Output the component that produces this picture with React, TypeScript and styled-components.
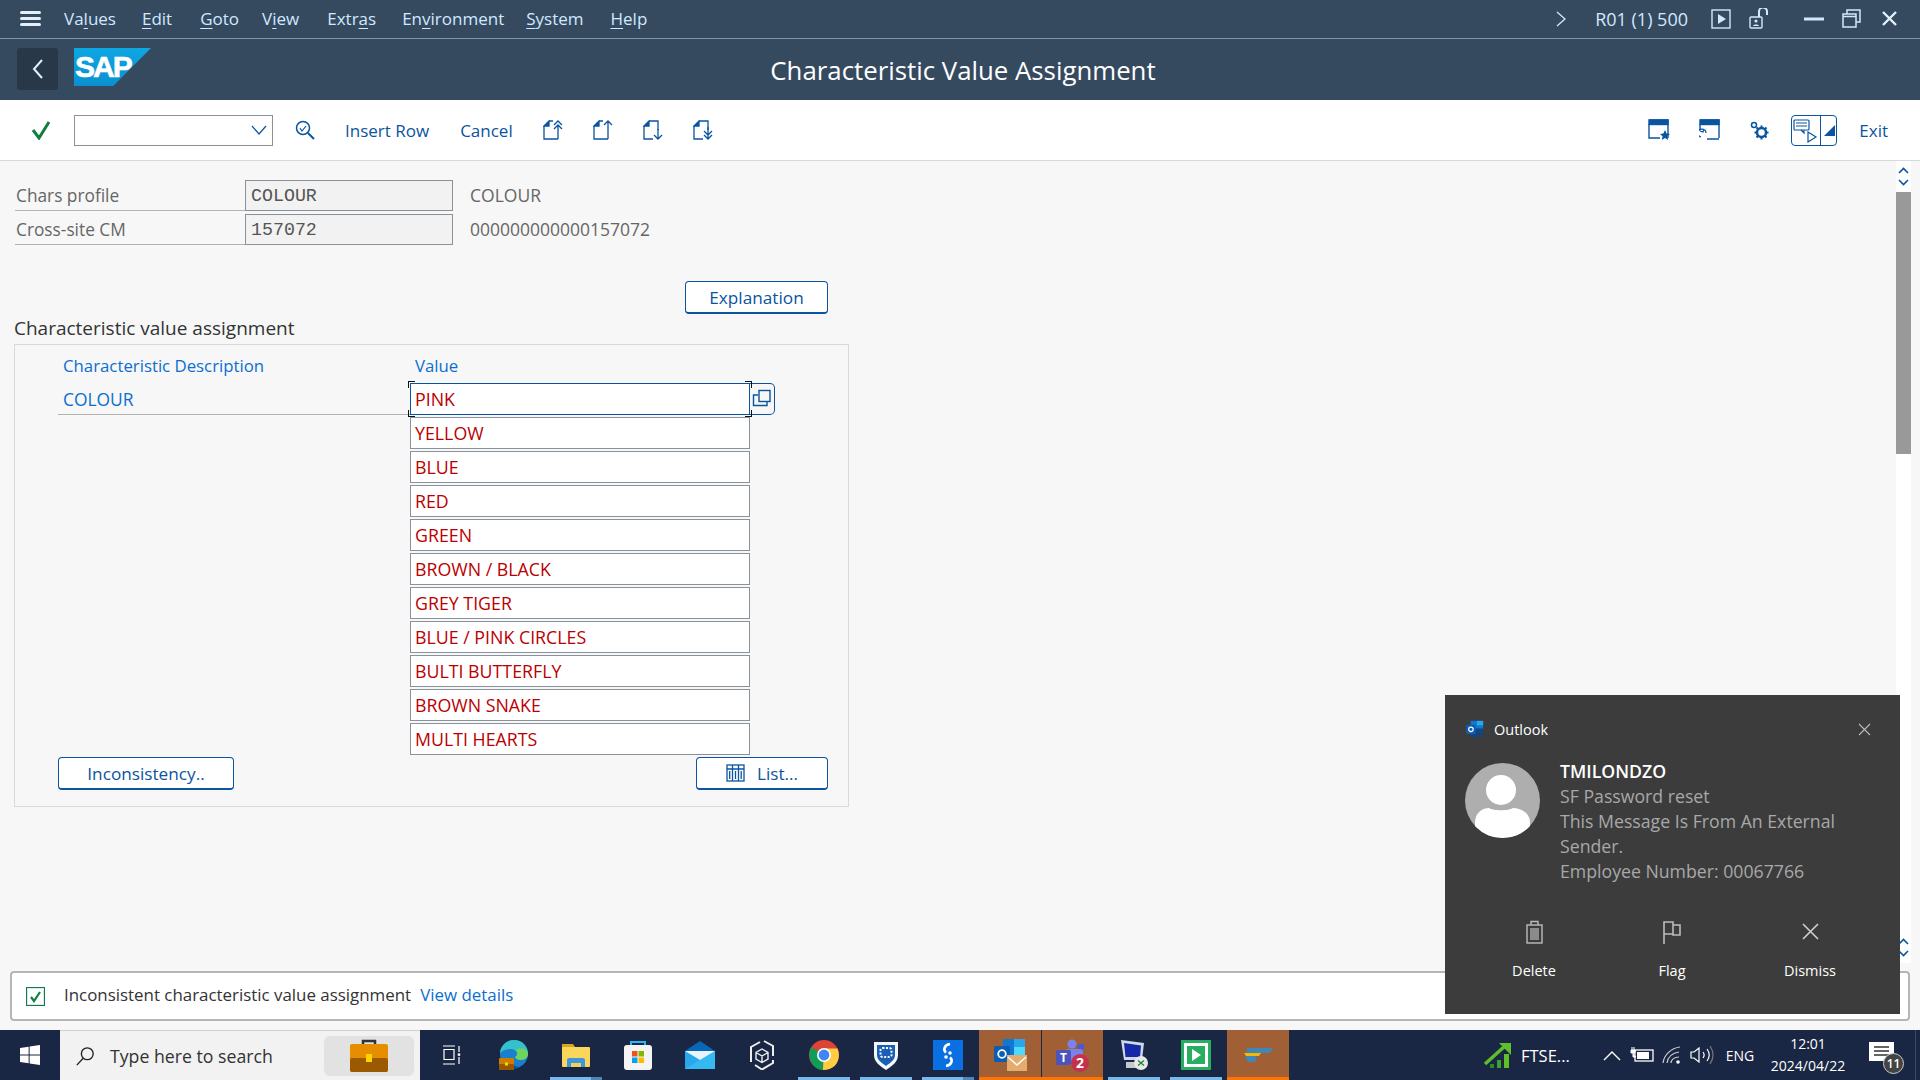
import React from "react";
import styled, { createGlobalStyle } from "styled-components";

const BLUE = "#0a54a0";
const UI_FONT = `"Open Sans", "Noto Sans", sans-serif`;

const GlobalStyle = createGlobalStyle`
  html, body {
    margin: 0;
    padding: 0;
    width: 1920px;
    height: 1080px;
    overflow: hidden;
    background: #f7f7f7;
    font-family: ${UI_FONT};
  }
  * { box-sizing: border-box; }
`;

const Page = styled.div`
  position: relative;
  display: flex;
  flex-direction: column;
  width: 1920px;
  height: 1080px;
`;

/* shell header */
const MenuBar = styled.div`
  display: flex;
  align-items: center;
  height: 39px;
  flex: none;
  padding-bottom: 1px;
  background: #354a5f;
  border-bottom: 1px solid #7f96b0;
  color: #d1e8ff;
  font-size: 17px;
`;

const Hamburger = styled.div`
  display: flex;
  flex-direction: column;
  gap: 3px;
  width: 21px;
  margin-left: 20px;
  margin-right: 23px;
  span {
    display: block;
    height: 3px;
    border-radius: 2px;
    background: #e3f0fc;
  }
`;

const MenuItem = styled.span<{ $gap: number }>`
  margin-right: ${(p) => p.$gap}px;
  u { text-underline-offset: 3px; text-decoration-thickness: 1px; }
`;

const MenuRight = styled.div`
  display: flex;
  align-items: center;
  margin-left: auto;
  svg { display: block; }
`;

const SystemName = styled.span`
  margin-left: 29px;
  margin-right: 23px;
  font-size: 18px;
`;

const TitleBar = styled.div`
  display: grid;
  grid-template-columns: 1fr auto 1fr;
  align-items: center;
  height: 61px;
  flex: none;
  background: #354a5f;
`;

const TitleLeft = styled.div`
  display: flex;
  align-items: flex-start;
  height: 100%;
  padding: 9px 0 0 17px;
`;

const BackButton = styled.div`
  display: flex;
  align-items: center;
  justify-content: center;
  width: 41px;
  height: 42px;
  border-radius: 3px;
  background: #283848;
`;

const SapLogo = styled.div`
  width: 77px;
  height: 38px;
  margin-left: 16px;
  padding-left: 1px;
  background: linear-gradient(180deg, #0ea7e3, #0a8fd0);
  clip-path: polygon(0 0, 100% 0, 51% 100%, 0 100%);
  color: #fff;
  font: 700 30px/38px "Liberation Sans", sans-serif;
  letter-spacing: -2px;
  -webkit-text-stroke: 0.6px #fff;
`;

const ScreenTitle = styled.div`
  margin-left: 6px;
  color: #fff;
  font-size: 25.8px;
`;

/* application toolbar */
const Toolbar = styled.div`
  display: flex;
  align-items: center;
  height: 61px;
  flex: none;
  padding-left: 31px;
  background: #fff;
  border-bottom: 1px solid #d9d9d9;
  color: ${BLUE};
  font-size: 17px;
  svg { display: block; flex: none; }
`;

const CommandBox = styled.div`
  display: flex;
  align-items: center;
  justify-content: flex-end;
  width: 199px;
  height: 31px;
  margin-left: 23px;
  margin-right: 22px;
  padding-right: 5px;
  border: 1px solid #89919a;
`;

const ToolText = styled.span<{ $left: number }>`
  margin-left: ${(p) => p.$left}px;
`;

const ToolIcon = styled.span<{ $left: number }>`
  display: block;
  margin-left: ${(p) => p.$left}px;
`;

const ToolbarRight = styled.div`
  display: flex;
  align-items: center;
  margin-left: auto;
  padding-right: 32px;
`;

const SplitToggle = styled.div`
  display: flex;
  width: 46px;
  height: 31px;
  margin-left: 22px;
  margin-right: 22px;
  border: 1px solid ${BLUE};
  border-radius: 4px;
  > div { display: flex; align-items: center; justify-content: center; }
  > div:first-child { flex: 1; border-right: 1px solid ${BLUE}; }
  > div:last-child { width: 15px; }
`;

/* body */
const Body = styled.div`
  display: flex;
  flex-direction: column;
  flex: 1;
  min-height: 0;
  background: #f7f7f7;
`;

const ScrollArea = styled.div`
  display: flex;
  flex: 1;
  min-height: 0;
`;

const Content = styled.div`
  flex: 1;
  padding: 19px 0 0 15px;
`;

const FormRow = styled.div`
  display: flex;
  align-items: center;
  height: 31px;
  margin-bottom: 3px;
`;

const FormLabel = styled.div`
  display: flex;
  align-items: center;
  width: 230px;
  height: 100%;
  padding-left: 1px;
  border-bottom: 1px solid #b3b3b3;
  color: #666;
  font-size: 17.3px;
`;

const DisplayField = styled.div`
  display: flex;
  align-items: center;
  width: 208px;
  height: 100%;
  padding-left: 5px;
  border: 1px solid #89919a;
  background: #f2f2f2;
  color: #555;
  font: 18.3px "Liberation Mono", monospace;
`;

const FieldText = styled.div`
  margin-left: 17px;
  margin-top: -1px;
  color: #666;
  font-size: 17.5px;
`;

const ButtonRow = styled.div<{ $width: number }>`
  display: flex;
  justify-content: space-between;
  width: ${(p) => p.$width}px;
`;

const EndRow = styled(ButtonRow)`
  justify-content: flex-end;
  margin-top: 36px;
`;

const PushButton = styled.button<{ $width: number }>`
  display: flex;
  align-items: center;
  justify-content: center;
  gap: 12px;
  width: ${(p) => p.$width}px;
  height: 33px;
  padding: 0;
  border: 1px solid ${BLUE};
  border-bottom-width: 2px;
  border-radius: 4px;
  background: #fff;
  color: ${BLUE};
  font: 17.2px ${UI_FONT};
`;

const GroupTitle = styled.div`
  height: 24px;
  margin: 2px 0 4px -1px;
  color: #333;
  font-size: 19px;
  line-height: 24px;
`;

const GroupBox = styled.div`
  width: 835px;
  height: 463px;
  margin-left: -1px;
  padding: 6px 0 0 43px;
  border: 1px solid #d9d9d9;
`;

const ValueGrid = styled.div`
  display: grid;
  grid-template-columns: 352px 340px 25px;
  grid-auto-rows: 32px;
  row-gap: 2px;
`;

const HeadRow = styled.div`
  display: grid;
  grid-template-columns: 352px 340px;
  align-items: center;
  height: 28px;
  margin-bottom: 4px;
  color: #0a6ed1;
  font-size: 16.8px;
  span { padding-left: 5px; }
`;

const DescCell = styled.div`
  display: flex;
  align-items: center;
  padding-left: 5px;
  border-bottom: 1px solid #b3b3b3;
  color: #0a6ed1;
  font-size: 17.4px;
`;

const ValueField = styled.div<{ $focused?: boolean }>`
  position: relative;
  grid-column: 2;
  display: flex;
  align-items: center;
  padding-left: 4px;
  border: 1px solid ${(p) => (p.$focused ? BLUE : "#89919a")};
  background: #fff;
  color: #bb0000;
  font-size: 17.8px;
`;

const FocusCorner = styled.i<{ $v: "top" | "bottom"; $h: "left" | "right" }>`
  position: absolute;
  ${(p) => p.$v}: -3px;
  ${(p) => p.$h}: -3px;
  width: 7px;
  height: 7px;
  border-${(p) => p.$v}: 1px solid #111;
  border-${(p) => p.$h}: 1px solid #111;
`;

const CopyButton = styled.div`
  display: flex;
  align-items: center;
  justify-content: center;
  border: 1px solid ${BLUE};
  border-left: none;
  border-radius: 0 5px 5px 0;
`;

const BoxButtons = styled(ButtonRow)`
  margin-top: 2px;
`;

const ScrollTrack = styled.div`
  display: flex;
  flex-direction: column;
  width: 15px;
  margin: 0 9px 0 0;
  background: #fff;
  svg { display: block; margin: 0 auto; }
`;

const ScrollArrows = styled.div`
  display: flex;
  flex-direction: column;
  gap: 5px;
  padding-top: 6px;
  height: 31px;
`;

const ScrollThumb = styled.div`
  height: 262px;
  background: #999;
`;

const ScrollSpacer = styled.div`
  flex: 1;
`;

const Footer = styled.div`
  flex: none;
  padding: 8px 10px 9px;
`;

const MessageBar = styled.div`
  display: flex;
  align-items: center;
  height: 50px;
  padding: 0 0 3px 13px;
  border: 2px solid #b5b5b5;
  border-radius: 4px;
  background: #fff;
  color: #333;
  font-size: 16.9px;
`;

const MessageCheck = styled.div`
  display: flex;
  align-items: center;
  justify-content: center;
  width: 19px;
  height: 19px;
  margin-top: 3px;
  margin-right: 19px;
  margin-left: 1px;
  border: 1px solid #107e3e;
  outline: 1px solid #d4e9f7;
  outline-offset: -2px;
`;

const DetailsLink = styled.span`
  margin-left: 9px;
  color: #0a6ed1;
`;

/* outlook toast */
const Toast = styled.div`
  position: absolute;
  left: 1445px;
  top: 695px;
  width: 455px;
  height: 319px;
  padding: 23px 0 0 20px;
  background: #3c3c3c;
  color: #fff;
  font-family: "Open Sans", sans-serif;
  svg { display: block; }
`;

const ToastHead = styled.div`
  display: flex;
  align-items: center;
  height: 22px;
  font-size: 14.5px;
  gap: 9px;
`;

const ToastClose = styled.div`
  margin-left: auto;
  margin-right: 29px;
`;

const ToastBody = styled.div`
  display: flex;
  gap: 20px;
  margin-top: 23px;
`;

const Avatar = styled.div`
  flex: none;
  width: 75px;
  height: 75px;
  border-radius: 50%;
  overflow: hidden;
`;

const ToastText = styled.div`
  width: 300px;
  margin-top: -4px;
  color: #a8a8a8;
  font-size: 17.7px;
  line-height: 25px;
  strong { display: block; color: #fff; font-weight: 600; }
`;

const ToastActions = styled.div`
  display: grid;
  grid-template-columns: repeat(3, 138px);
  margin-top: 36px;
`;

const ToastAction = styled.div`
  display: flex;
  flex-direction: column;
  align-items: center;
  gap: 15px;
  font-size: 14.5px;
  line-height: 24px;
`;

/* windows taskbar */
const Taskbar = styled.div`
  display: flex;
  align-items: stretch;
  height: 50px;
  flex: none;
  background: #1a2744;
  color: #fff;
  svg { display: block; }
`;

const StartButton = styled.div`
  display: flex;
  align-items: center;
  justify-content: center;
  width: 60px;
`;

const SearchBox = styled.div`
  display: flex;
  align-items: center;
  width: 360px;
  margin-right: 1px;
  padding: 0 6px 0 15px;
  background: #f2f2f2;
  border-top: 1px solid #cfcfcf;
  color: #333;
  font-size: 17.7px;
`;

const SearchLabel = styled.span`
  margin-left: 15px;
`;

const SearchPill = styled.div`
  display: flex;
  align-items: center;
  justify-content: center;
  width: 90px;
  height: 40px;
  margin-left: auto;
  border-radius: 6px;
  background: #e2e2e2;
`;

type CellState = "open" | "stack" | "active";

const TaskCell = styled.div<{ $state?: CellState; $divider?: boolean }>`
  position: relative;
  display: flex;
  align-items: center;
  justify-content: center;
  width: 62px;
  background: ${(p) => (p.$state === "active" ? "#a05f35" : "transparent")};
  box-shadow: ${(p) => (p.$divider ? "inset 1px 0 0 #1a2744" : "none")};
  &::after {
    content: "";
    display: ${(p) => (p.$state ? "block" : "none")};
    position: absolute;
    left: ${(p) => (p.$state === "active" ? 0 : 5)}px;
    right: ${(p) => (p.$state === "active" ? 0 : 5)}px;
    bottom: 0;
    height: 3px;
    background: ${(p) =>
      p.$state === "active"
        ? "#ff7300"
        : p.$state === "stack"
        ? "linear-gradient(90deg, #76b9ed 78%, #4f86b8 78%)"
        : "#76b9ed"};
  }
`;

const Tray = styled.div`
  display: flex;
  align-items: center;
  margin-left: auto;
  margin-right: 4px;
  padding-right: 16px;
  border-right: 1px solid #3d4963;
  font-size: 15px;
`;

const TrayTicker = styled.div`
  display: flex;
  align-items: center;
  gap: 8px;
  width: 114px;
  font-size: 16.5px;
`;

const TrayIcon = styled.div`
  display: flex;
  justify-content: center;
  width: 30px;
`;

const TrayLang = styled.div`
  width: 46px;
  text-align: center;
  font-size: 14px;
`;

const TrayClock = styled.div`
  width: 90px;
  text-align: center;
  font-size: 14px;
  line-height: 22px;
`;

const TrayNotify = styled.div`
  position: relative;
  margin-left: 16px;
  width: 30px;
  height: 30px;
`;

const NotifyBadge = styled.span`
  position: absolute;
  right: -5px;
  bottom: -4px;
  width: 21px;
  height: 21px;
  border: 1px solid #ccc;
  border-radius: 50%;
  background: #444;
  font-size: 12px;
  font-weight: 600;
  line-height: 19px;
  text-align: center;
`;

/* drawn icons */
const PageIcon = ({ down, double }: { down?: boolean; double?: boolean }) => (
  <svg width="20" height="20" viewBox="0 0 20 20" fill="none" stroke={BLUE} strokeWidth="1.3">
    <path d="M1 6 6 1V6Z" fill={BLUE} />
    {down ? (
      <>
        <path d="M1 6V19H10M6 1H15V10" />
        <path d={double ? "M15 7V18M11 11l4 4 4-4M11 15l4 4 4-4" : "M15 9V19M11 15l4 4 4-4"} />
      </>
    ) : (
      <>
        <path d="M1 6V19H15M6 1H10" />
        <path d={double ? "M15 19V5M11 5l4-4 4 4M11 9l4-4 4 4" : "M15 19V1M11 5l4-4 4 4"} />
      </>
    )}
  </svg>
);

const WindowIcon = ({ children }: { children: React.ReactNode }) => (
  <svg width="22" height="22" viewBox="0 0 22 22" fill="none" stroke={BLUE} strokeWidth="1.4">
    <path d="M1 1H20V19" />
    <rect x="1" y="1" width="19" height="4.5" fill={BLUE} />
    {children}
  </svg>
);

const OutlookGlyph = ({ size }: { size: number }) => (
  <svg width={size} height={size} viewBox="0 0 32 32">
    <rect x="9" y="3" width="20" height="14" fill="#0f78d4" />
    <rect x="19" y="3" width="10" height="7" fill="#28a8ea" />
    <path d="M9 15h20v14H9z" fill="#14447d" opacity="0.9" />
    <rect x="2" y="9" width="15" height="15" rx="1.5" fill="#0a5fb4" />
    <circle cx="9.5" cy="16.5" r="3.6" fill="none" stroke="#fff" strokeWidth="1.8" />
  </svg>
);

const taskIcons: { key: string; state?: CellState; divider?: boolean; icon: React.ReactNode }[] = [
  {
    key: "taskview",
    icon: (
      <svg width="20" height="20" viewBox="0 0 20 20" fill="none" stroke="#fff" strokeWidth="1.2">
        <path d="M1 1h12M1 19h12M2 4.5h10v10H2zM17 1v6M17 12v7" />
        <rect x="15.8" y="8.4" width="2.4" height="2.4" fill="#fff" stroke="none" />
      </svg>
    ),
  },
  {
    key: "edge",
    icon: (
      <svg width="30" height="30" viewBox="0 0 30 30">
        <circle cx="15" cy="14" r="14" fill="#1b7fd0" />
        <path d="M1 13C2 5 8 0 15 0c8 0 14 6 14 14 0 3-3 6-7 6-3 0-5-1-6-3 3-1 3-7-3-8-4 0-9 1-12 4z" fill="#35c1c9" />
        <path d="M29 14c0 3-3 6-7 6-3 0-5-1-6-3 3-1 3-5 1-7 5-3 12-1 12 4z" fill="#6fd45b" />
        <path d="M11 19c0 4 4 8 9 8 1 0 2 0 3-1-2 2-5 3-8 3-3 0-5-1-7-2z" fill="#0f4f94" />
        <rect x="0" y="18" width="15" height="12" rx="1" fill="#cf7d00" />
        <rect x="0" y="24" width="15" height="6" rx="1" fill="#975600" />
        <rect x="6" y="22.5" width="3" height="3" fill="#ffd400" />
      </svg>
    ),
  },
  {
    key: "explorer",
    state: "stack",
    icon: (
      <svg width="28" height="24" viewBox="0 0 28 24">
        <path d="M0 1h11l2 3v4H0z" fill="#d9a520" />
        <rect x="0" y="4" width="28" height="20" rx="1" fill="#fbd65a" />
        <path d="M5 24v-7a2 2 0 0 1 2-2h14a2 2 0 0 1 2 2v7h-4v-4h-10v4z" fill="#3d98dc" />
        <rect x="9" y="20" width="10" height="4" fill="#f5cf58" />
      </svg>
    ),
  },
  {
    key: "store",
    icon: (
      <svg width="28" height="30" viewBox="0 0 28 30">
        <path d="M7 8V2h14v6" fill="none" stroke="#29b6f6" strokeWidth="2" />
        <rect x="0" y="5" width="28" height="25" rx="3" fill="#f4f4f4" />
        <rect x="8" y="11" width="5.5" height="5.5" fill="#f25022" />
        <rect x="14.5" y="11" width="5.5" height="5.5" fill="#7fba00" />
        <rect x="8" y="17.5" width="5.5" height="5.5" fill="#00a4ef" />
        <rect x="14.5" y="17.5" width="5.5" height="5.5" fill="#ffb900" />
      </svg>
    ),
  },
  {
    key: "mail",
    icon: (
      <svg width="30" height="28" viewBox="0 0 30 28">
        <path d="M15 0 30 10H0z" fill="#0a67b5" />
        <rect x="0" y="10" width="30" height="18" fill="#28a8ea" />
        <path d="M0 10h30L15 19z" fill="#e8f3fb" />
        <path d="M30 10v18H0z" fill="#50d9ff" opacity="0.35" />
      </svg>
    ),
  },
  {
    key: "cube",
    icon: (
      <svg width="28" height="30" viewBox="0 0 28 30" fill="none" stroke="#eee" strokeWidth="1.4">
        <path d="M14 9 20 12.5V19L14 22.5 8 19V12.5ZM8 12.5l6 3.5 6-3.5M14 16v6.5" />
        <path d="M12 2 3 7v15M16 1l9 5v10M25 20v3l-11 6.5L7 25" strokeWidth="2" />
      </svg>
    ),
  },
  {
    key: "chrome",
    state: "open",
    icon: (
      <svg width="30" height="30" viewBox="0 0 30 30">
        <circle cx="15" cy="15" r="15" fill="#db4437" />
        <path d="M15 15 2.2 7.2C-1 13 0 21 5 26c3 3 6 4 9 4z" fill="#0f9d58" />
        <path d="M15 8.5h13.5C31 14 30 21 26 25.5 23 28.7 18 30 14 30z" fill="#ffcd40" />
        <circle cx="15" cy="15" r="7" fill="#fff" />
        <circle cx="15" cy="15" r="5.4" fill="#4285f4" />
      </svg>
    ),
  },
  {
    key: "shield",
    state: "open",
    icon: (
      <svg width="24" height="30" viewBox="0 0 24 30">
        <path d="M0 2h24v13c0 7-6 11-12 15C6 26 0 22 0 15z" fill="#f4f8fc" />
        <path d="M3 5h18v10c0 5-5 8-9 11-4-3-9-6-9-11z" fill="#1a5fb4" />
        <rect x="6.5" y="8" width="11" height="9" rx="2" fill="none" stroke="#fff" strokeWidth="2" strokeDasharray="2 1.5" />
      </svg>
    ),
  },
  {
    key: "blue-s",
    state: "stack",
    icon: (
      <svg width="30" height="30" viewBox="0 0 30 30">
        <rect width="30" height="30" fill="#0a6fe0" />
        <path d="M17 4c-6 1-7 6-4 8.500M13 26c6-1 7-6 4-8.500" fill="none" stroke="#fff" strokeWidth="2.6" />
        <circle cx="13" cy="17" r="1.8" fill="#fff" />
        <circle cx="17" cy="13" r="1.8" fill="#fff" />
      </svg>
    ),
  },
  {
    key: "outlook",
    state: "active",
    icon: (
      <svg width="33" height="32" viewBox="0 0 33 32">
        <rect x="9" y="0" width="22" height="16" fill="#0f78d4" />
        <rect x="20" y="0" width="11" height="8" fill="#28a8ea" />
        <rect x="20" y="8" width="11" height="8" fill="#50d9ff" />
        <rect x="0" y="7" width="16" height="16" rx="1.5" fill="#0a5fb4" />
        <circle cx="8" cy="15" r="3.8" fill="none" stroke="#fff" strokeWidth="1.8" />
        <rect x="13" y="16" width="20" height="16" fill="#e5ac6f" />
        <path d="M14 18 23 26 32 18" fill="none" stroke="#fff" strokeWidth="1.5" />
      </svg>
    ),
  },
  {
    key: "teams",
    state: "active",
    divider: true,
    icon: (
      <svg width="33" height="33" viewBox="0 0 33 33">
        <circle cx="16" cy="5" r="4.5" fill="#7b83eb" />
        <circle cx="25" cy="8" r="3.5" fill="#5059c9" />
        <rect x="9" y="10" width="18" height="16" rx="3" fill="#7b83eb" />
        <rect x="0" y="11" width="15" height="15" rx="1.5" fill="#4b53bc" />
        <text x="7.5" y="23" fill="#fff" fontSize="12" fontWeight="700" textAnchor="middle" fontFamily="Open Sans, sans-serif">T</text>
        <circle cx="24" cy="24" r="9" fill="#c4314b" />
        <text x="24" y="29" fill="#fff" fontSize="14" fontWeight="700" textAnchor="middle" fontFamily="Open Sans, sans-serif">2</text>
      </svg>
    ),
  },
  {
    key: "remote",
    state: "open",
    icon: (
      <svg width="28" height="30" viewBox="0 0 28 30">
        <path d="M1 0 24 3 22 20 4 20z" fill="#cfd8e6" />
        <path d="M4 3 21 5.5 20 17 5.5 17z" fill="#1529a8" />
        <path d="M6 22h12v6H6z" fill="#c5c8ce" />
        <circle cx="21" cy="23" r="7" fill="#e8e8e8" />
        <path d="M18 20.5l3 2.500-3 2.500M24 20.500l-3 2.500 3 2.500" fill="none" stroke="#1a8a3c" strokeWidth="1.4" />
      </svg>
    ),
  },
  {
    key: "play",
    state: "open",
    icon: (
      <svg width="30" height="30" viewBox="0 0 30 30">
        <rect width="30" height="30" fill="#27ae60" />
        <rect x="3" y="3" width="24" height="24" fill="#fff" />
        <rect x="6" y="6" width="18" height="18" fill="#27ae60" />
        <path d="M11 9l9 6-9 6z" fill="#fff" />
      </svg>
    ),
  },
  {
    key: "chars",
    state: "active",
    icon: (
      <svg width="30" height="14" viewBox="0 0 30 14">
        <path d="M4 0h26l-3 5H3z" fill="#3f88b5" />
        <path d="M1 5h17l-2 3H3z" fill="#f5b800" />
        <path d="M2 8h12l-2 6H5z" fill="#3f88b5" />
      </svg>
    ),
  },
];

const values = [
  "PINK",
  "YELLOW",
  "BLUE",
  "RED",
  "GREEN",
  "BROWN / BLACK",
  "GREY TIGER",
  "BLUE / PINK CIRCLES",
  "BULTI BUTTERFLY",
  "BROWN SNAKE",
  "MULTI HEARTS",
];

const ScrollButtons = () => (
  <ScrollArrows>
    <svg width="11" height="7" viewBox="0 0 11 7" fill="none" stroke={BLUE} strokeWidth="1.6"><path d="M1 6l4.5-4.5L10 6" /></svg>
    <svg width="11" height="7" viewBox="0 0 11 7" fill="none" stroke={BLUE} strokeWidth="1.6"><path d="M1 1l4.5 4.5L10 1" /></svg>
  </ScrollArrows>
);

export default function App() {
  return (
    <Page>
      <GlobalStyle />

      <MenuBar>
        <Hamburger>
          <span />
          <span />
          <span />
        </Hamburger>
        <MenuItem $gap={26}>Va<u>l</u>ues</MenuItem>
        <MenuItem $gap={28}><u>E</u>dit</MenuItem>
        <MenuItem $gap={23}><u>G</u>oto</MenuItem>
        <MenuItem $gap={28}>V<u>i</u>ew</MenuItem>
        <MenuItem $gap={26}>Extr<u>a</u>s</MenuItem>
        <MenuItem $gap={22}>En<u>v</u>ironment</MenuItem>
        <MenuItem $gap={27}><u>S</u>ystem</MenuItem>
        <MenuItem $gap={0}><u>H</u>elp</MenuItem>
        <MenuRight>
          <svg width="10" height="16" viewBox="0 0 10 16" fill="none" stroke="#d1e8ff" strokeWidth="1.3">
            <path d="M1 1l8 7-8 7" />
          </svg>
          <SystemName>R01 (1) 500</SystemName>
          <svg width="20" height="20" viewBox="0 0 20 20" fill="none" stroke="#d1e8ff" strokeWidth="1.4">
            <rect x="1" y="1" width="18" height="18" />
            <path d="M7 5l8 5-8 5z" fill="#d1e8ff" stroke="none" />
          </svg>
          <svg style={{ marginLeft: 18 }} width="21" height="22" viewBox="0 0 21 22" fill="none" stroke="#d1e8ff" strokeWidth="1.4">
            <rect x="1" y="9" width="12" height="11" rx="1" />
            <path d="M10 9V4a4 4 0 0 1 8-1v4" strokeWidth="2" />
            <circle cx="7" cy="13" r="1.6" fill="#d1e8ff" stroke="none" />
            <path d="M4 18c0-2 6-2 6 0z" fill="#d1e8ff" stroke="none" />
          </svg>
          <svg style={{ marginLeft: 34 }} width="20" height="4" viewBox="0 0 20 4">
            <rect width="20" height="3" y="0.5" fill="#d1e8ff" />
          </svg>
          <svg style={{ marginLeft: 18 }} width="19" height="19" viewBox="0 0 19 19" fill="none" stroke="#d1e8ff" strokeWidth="1.5">
            <rect x="1" y="5" width="13" height="13" />
            <path d="M5 5V1h13v12h-4" />
            <path d="M1 7.5h13" />
          </svg>
          <svg style={{ marginLeft: 21, marginRight: 23 }} width="15" height="15" viewBox="0 0 15 15" stroke="#e3f0fc" strokeWidth="2.4">
            <path d="M1 1l13 13M14 1 1 14" />
          </svg>
        </MenuRight>
      </MenuBar>

      <TitleBar>
        <TitleLeft>
          <BackButton>
            <svg width="11" height="20" viewBox="0 0 11 20" fill="none" stroke="#e3f0fc" strokeWidth="2">
              <path d="M10 1 2 10l8 9" />
            </svg>
          </BackButton>
          <SapLogo>SAP</SapLogo>
        </TitleLeft>
        <ScreenTitle>Characteristic Value Assignment</ScreenTitle>
        <div />
      </TitleBar>

      <Toolbar>
        <svg width="20" height="20" viewBox="0 0 20 20" fill="none" stroke="#107e3e" strokeWidth="3">
          <path d="M2 10l6 8L18 2" />
        </svg>
        <CommandBox>
          <svg width="16" height="10" viewBox="0 0 16 10" fill="none" stroke={BLUE} strokeWidth="1.2">
            <path d="M1 1l7 8 7-8" />
          </svg>
        </CommandBox>
        <svg width="20" height="20" viewBox="0 0 20 20" fill="none" stroke={BLUE} strokeWidth="1.5">
          <circle cx="8" cy="8" r="6.5" />
          <path d="M13 13l6 6" strokeWidth="2" />
          <path d="M5 8l2 3 4-5" strokeWidth="1.2" />
        </svg>
        <ToolText $left={30}>Insert Row</ToolText>
        <ToolText $left={31}>Cancel</ToolText>
        <ToolIcon $left={30}><PageIcon double /></ToolIcon>
        <ToolIcon $left={30}><PageIcon /></ToolIcon>
        <ToolIcon $left={30}><PageIcon down /></ToolIcon>
        <ToolIcon $left={30}><PageIcon down double /></ToolIcon>
        <ToolbarRight>
          <WindowIcon>
            <path d="M1 5v14h11" />
            <path d="M17 11l1.6 3.600 3.400.3-2.600 2.300.8 3.800-3.200-2-3.200 2 .8-3.800-2.600-2.300 3.400-.3z" fill={BLUE} stroke="none" />
          </WindowIcon>
          <ToolIcon $left={29}>
            <WindowIcon>
              <path d="M1 5v6M8 20h12" />
              <path d="M7 14a4 4 0 1 0-5 4M1 12l3 1 1-3" strokeWidth="1.2" />
            </WindowIcon>
          </ToolIcon>
          <ToolIcon $left={28}>
            <svg width="20" height="20" viewBox="0 0 20 20" fill="none" stroke={BLUE}>
              <circle cx="5" cy="5" r="2.5" strokeWidth="1.5" />
              <circle cx="12.5" cy="12.5" r="4.5" strokeWidth="2.5" />
              <path d="M12.5 5.5v2M12.5 17.5v2M5.5 12.5h2M17.5 12.5h2M7.5 7.5l1.5 1.5M16 16l1.5 1.5M17.5 7.5 16 9M9 16l-1.5 1.5" strokeWidth="2" />
            </svg>
          </ToolIcon>
          <SplitToggle>
            <div>
              <svg width="26" height="25" viewBox="0 0 26 25" fill="none" stroke={BLUE} strokeWidth="1.2">
                <rect x="1" y="2" width="15" height="10" rx="1" />
                <path d="M3 5h11M3 8h11M8 12l3 3v-3" />
                <path d="M15 14l8 5-8 5z" />
              </svg>
            </div>
            <div>
              <svg width="12" height="12" viewBox="0 0 12 12">
                <path d="M12 1v11H1z" fill={BLUE} />
              </svg>
            </div>
          </SplitToggle>
          <span>Exit</span>
        </ToolbarRight>
      </Toolbar>

      <Body>
        <ScrollArea>
          <Content>
            <FormRow>
              <FormLabel>Chars profile</FormLabel>
              <DisplayField>COLOUR</DisplayField>
              <FieldText>COLOUR</FieldText>
            </FormRow>
            <FormRow>
              <FormLabel>Cross-site CM</FormLabel>
              <DisplayField>157072</DisplayField>
              <FieldText>000000000000157072</FieldText>
            </FormRow>
            <EndRow $width={813}>
              <PushButton $width={143}>Explanation</PushButton>
            </EndRow>
            <GroupTitle>Characteristic value assignment</GroupTitle>
            <GroupBox>
              <HeadRow>
                <span>Characteristic Description</span>
                <span>Value</span>
              </HeadRow>
              <ValueGrid>
                {values.map((value, index) =>
                  index === 0 ? (
                    <React.Fragment key={value}>
                      <DescCell>COLOUR</DescCell>
                      <ValueField $focused>
                        {value}
                        <FocusCorner $v="top" $h="left" />
                        <FocusCorner $v="top" $h="right" />
                        <FocusCorner $v="bottom" $h="left" />
                        <FocusCorner $v="bottom" $h="right" />
                      </ValueField>
                      <CopyButton>
                        <svg width="20" height="20" viewBox="0 0 20 20" fill="none" stroke={BLUE} strokeWidth="1.4">
                          <rect x="7" y="1.5" width="11" height="11" />
                          <path d="M6 6H1.5V16.5H15V13" />
                        </svg>
                      </CopyButton>
                    </React.Fragment>
                  ) : (
                    <ValueField key={value}>{value}</ValueField>
                  )
                )}
              </ValueGrid>
              <BoxButtons $width={770}>
                <PushButton $width={176}>Inconsistency..</PushButton>
                <PushButton $width={132}>
                  <svg width="19" height="18" viewBox="0 0 19 18" fill="none" stroke={BLUE} strokeWidth="1.3">
                    <rect x="1" y="1" width="17" height="16" />
                    <path d="M1 5h17M6.5 1v16M12.5 1v16M3.7 7v8M9.5 7v8M15.2 7v8" />
                  </svg>
                  List...
                </PushButton>
              </BoxButtons>
            </GroupBox>
          </Content>
          <ScrollTrack>
            <ScrollButtons />
            <ScrollThumb />
            <ScrollSpacer />
            <ScrollButtons />
          </ScrollTrack>
        </ScrollArea>
        <Footer>
          <MessageBar>
            <MessageCheck>
              <svg width="13" height="13" viewBox="0 0 13 13" fill="none" stroke="#107e3e" strokeWidth="2.2">
                <path d="M2 7l3 4 6-9" />
              </svg>
            </MessageCheck>
            Inconsistent characteristic value assignment
            <DetailsLink>View details</DetailsLink>
          </MessageBar>
        </Footer>
      </Body>

      <Taskbar>
        <StartButton>
          <svg width="20" height="20" viewBox="0 0 22 22" fill="#fff">
            <path d="M0 3.2 9.5 1.8v8.700H0zM10.600 1.700 22 0v10.500H10.600zM0 11.500h9.500v8.700L0 18.800zM10.600 11.500H22V22l-11.400-1.700z" />
          </svg>
        </StartButton>
        <SearchBox>
          <svg width="20" height="20" viewBox="0 0 22 22" fill="none" stroke="#222" strokeWidth="1.5">
            <circle cx="13.5" cy="8.5" r="6.5" />
            <path d="M9 13.5 2 21" />
          </svg>
          <SearchLabel>Type here to search</SearchLabel>
          <SearchPill>
            <svg width="38" height="33" viewBox="0 0 38 33">
              <path d="M13 6V2h12v4" fill="none" stroke="#333" strokeWidth="2.5" />
              <rect x="0" y="5" width="38" height="28" rx="2" fill="#e78d00" />
              <rect x="0" y="19" width="38" height="14" rx="2" fill="#9c5a00" />
              <rect x="16" y="15" width="6" height="8" fill="#ffd400" />
            </svg>
          </SearchPill>
        </SearchBox>
        {taskIcons.map((item) => (
          <TaskCell key={item.key} $state={item.state} $divider={item.divider}>
            {item.icon}
          </TaskCell>
        ))}
        <Tray>
          <TrayTicker>
            <svg width="30" height="30" viewBox="0 0 30 30" fill="none">
              <path d="M2 24 22 6" stroke="#5fbf2a" strokeWidth="3.5" />
              <path d="M16 3h12v12z" fill="#5fbf2a" />
              <rect x="7" y="24" width="4" height="4" fill="#2e8b1e" />
              <rect x="14" y="20" width="4" height="8" fill="#3ea324" />
              <rect x="21" y="14" width="5" height="14" fill="#5fbf2a" />
            </svg>
            FTSE...
          </TrayTicker>
          <TrayIcon>
            <svg width="18" height="11" viewBox="0 0 18 11" fill="none" stroke="#fff" strokeWidth="1.4"><path d="M1 10l8-8 8 8" /></svg>
          </TrayIcon>
          <TrayIcon>
            <svg width="24" height="16" viewBox="0 0 24 16" fill="#fff">
              <rect x="5" y="3" width="18" height="11" fill="none" stroke="#fff" strokeWidth="1.3" />
              <rect x="7" y="5" width="12" height="7" />
              <path d="M2 0v3M4 0v3M1 3h4v3H1zM3 6v4h3" stroke="#fff" strokeWidth="1" />
            </svg>
          </TrayIcon>
          <TrayIcon>
            <svg width="20" height="18" viewBox="0 0 20 18" fill="none" stroke="#ccc" strokeWidth="1.2">
              <path d="M1 17C2 9 9 2 18 1M5 17c1-6 5-10 12-11M9 17c0-3 3-6 8-6" />
              <circle cx="16" cy="16" r="1.8" fill="#fff" stroke="none" />
            </svg>
          </TrayIcon>
          <TrayIcon>
            <svg width="24" height="18" viewBox="0 0 24 18" fill="none" stroke="#fff" strokeWidth="1.2">
              <path d="M1 6h3l5-4v14l-5-4H1z" />
              <path d="M13 6c1.5 2 1.5 4 0 6" />
              <path d="M17 3c3 4 3 8 0 12" />
              <path d="M20 0c4 6 4 12 0 18" stroke="#777" />
            </svg>
          </TrayIcon>
          <TrayLang>ENG</TrayLang>
          <TrayClock>
            12:01
            <br />
            2024/04/22
          </TrayClock>
          <TrayNotify>
            <svg width="26" height="24" viewBox="0 0 26 24">
              <path d="M0 2h25v19H0z" fill="#fff" />
              <path d="M5 7h15M5 11h15M5 15h15" stroke="#333" strokeWidth="1.4" />
            </svg>
            <NotifyBadge>11</NotifyBadge>
          </TrayNotify>
        </Tray>
      </Taskbar>

      <Toast>
        <ToastHead>
          <OutlookGlyph size={20} />
          Outlook
          <ToastClose>
            <svg width="13" height="13" viewBox="0 0 13 13" stroke="#bbb" strokeWidth="1.1"><path d="M1 1l11 11M12 1 1 12" /></svg>
          </ToastClose>
        </ToastHead>
        <ToastBody>
          <Avatar>
            <svg width="75" height="75" viewBox="0 0 75 75">
              <rect width="75" height="75" fill="#aeaeae" />
              <circle cx="36" cy="27" r="15" fill="#fff" />
              <path d="M10 75V60c0-11 8-15 14-15 4 3 20 3 24 0 7 0 17 4 17 15v15z" fill="#fff" />
            </svg>
          </Avatar>
          <ToastText>
            <strong>TMILONDZO</strong>
            SF Password reset
            <br />
            This Message Is From An External Sender.
            <br />
            Employee Number: 00067766
          </ToastText>
        </ToastBody>
        <ToastActions>
          <ToastAction>
            <svg width="17" height="24" viewBox="0 0 17 24" fill="none" stroke="#bcbcbc" strokeWidth="1.4">
              <rect x="1" y="5" width="15" height="18" />
              <path d="M5 5V1.5h7V5" />
              <rect x="4" y="8" width="9" height="12" fill="#8b8b8b" stroke="none" />
            </svg>
            Delete
          </ToastAction>
          <ToastAction>
            <svg width="20" height="24" viewBox="0 0 20 24" fill="none" stroke="#bcbcbc" strokeWidth="1.6">
              <path d="M2 24V2h9v3h7v10h-7V5M2 14h9" />
            </svg>
            Flag
          </ToastAction>
          <ToastAction>
            <svg width="24" height="24" viewBox="0 0 24 24" stroke="#d0d0d0" strokeWidth="1.6">
              <path d="M5 4l15 15M20 4 5 19" />
            </svg>
            Dismiss
          </ToastAction>
        </ToastActions>
      </Toast>
    </Page>
  );
}
